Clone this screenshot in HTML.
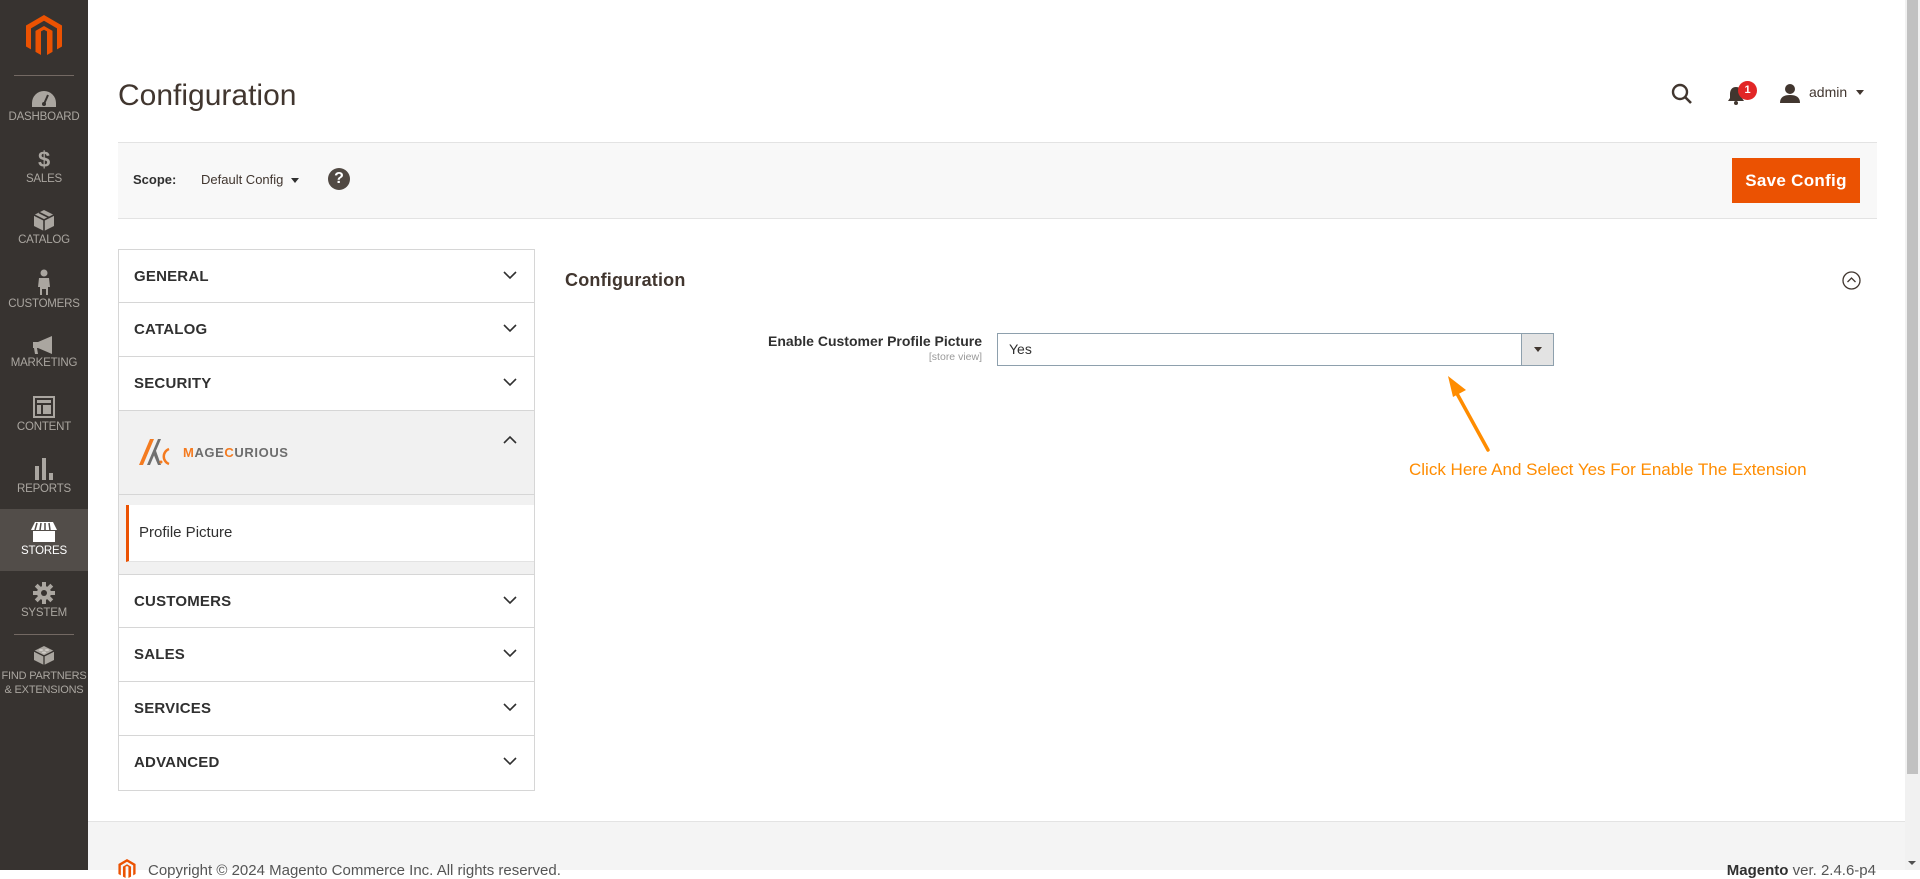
<!DOCTYPE html>
<html><head><meta charset="utf-8"><style>
*{box-sizing:border-box;margin:0;padding:0}
body{width:1920px;height:870px;overflow:hidden;background:#fff;font-family:"Liberation Sans",sans-serif;color:#303030;position:relative}
.sb{position:absolute;left:0;top:0;width:88px;height:870px;background:#373330}
.sb .it{position:absolute;left:0;width:88px;text-align:center;color:#aaa6a0;font-size:11.5px;letter-spacing:-.2px;white-space:nowrap}
.sb .it svg{display:block;margin:0 auto 3px}
.div{position:absolute;left:14px;width:60px;height:1px;background:#736963}
.abs{position:absolute}
.row{position:absolute;left:118px;width:417px;height:54px;border:1px solid #d6d6d6;border-top:none;background:#fff}
.row b{position:absolute;left:15px;top:18px;font-size:15px;color:#303030;letter-spacing:.2px}
.row svg{position:absolute;right:17px;top:21px}
</style></head><body>
<div class="sb">
 <svg class="abs" style="left:26px;top:15px" width="36" height="42" viewBox="0 0 36 42"><path d="M18 0L36 10.5V31.5L31 34.4V13.4L18 5.8L5 13.4V34.4L0 31.5V10.5Z M9.5 15.9L18 11L26.5 15.9V36.9L21 40V16.4L18 14.7L15 16.4V40L9.5 36.9Z" fill="#eb5202"/></svg>
 <div class="div" style="top:75px"></div>
 <div class="it" style="top:90px"><svg width="26" height="18" viewBox="0 0 26 18"><path d="M13 1A12 12 0 0 0 1 13v4h24v-4A12 12 0 0 0 13 1z" fill="#aaa6a0"/><path d="M13 14L17 5" stroke="#373330" stroke-width="2"/><circle cx="13" cy="14" r="2" fill="#373330"/></svg>DASHBOARD</div>
 <div class="it" style="top:149px"><div style="font-size:22px;font-weight:bold;line-height:22px;margin-bottom:2px">$</div>SALES</div>
 <div class="it" style="top:210px"><svg width="20" height="21" viewBox="0 0 20 21"><path d="M10 0L20 5V16L10 21L0 16V5Z" fill="#aaa6a0"/><path d="M0 5L10 10L20 5M10 10V21M5 2.5L15 7.5" stroke="#373330" stroke-width="1.6" fill="none"/></svg>CATALOG</div>
 <div class="it" style="top:269px"><svg width="14" height="26" viewBox="0 0 14 26"><circle cx="7" cy="4" r="3.5" fill="#aaa6a0"/><path d="M2 9h10l1 9h-2v8H9v-6H5v6H3v-8H1z" fill="#aaa6a0"/></svg>CUSTOMERS</div>
 <div class="it" style="top:336px"><svg width="24" height="18" viewBox="0 0 24 18"><path d="M1 6h5l14-6v18L6 12H5l1 6H3L2 12H1z" fill="#aaa6a0"/></svg>MARKETING</div>
 <div class="it" style="top:396px"><svg width="22" height="22" viewBox="0 0 22 22"><rect x="1" y="1" width="20" height="20" fill="none" stroke="#aaa6a0" stroke-width="2"/><rect x="4" y="4" width="14" height="3" fill="#aaa6a0"/><rect x="4" y="9" width="4" height="9" fill="#aaa6a0"/><rect x="10" y="9" width="8" height="9" fill="#aaa6a0"/></svg>CONTENT</div>
 <div class="it" style="top:458px"><svg width="20" height="22" viewBox="0 0 20 22"><rect x="1" y="8" width="4" height="14" fill="#aaa6a0"/><rect x="8" y="0" width="4" height="22" fill="#aaa6a0"/><rect x="15" y="15" width="4" height="7" fill="#aaa6a0"/></svg>REPORTS</div>
 <div class="abs" style="left:0;top:509px;width:88px;height:62px;background:#524d49"></div>
 <div class="it" style="top:522px;color:#fff"><svg width="26" height="20" viewBox="0 0 26 20"><path d="M4 0h18l4 8H0z" fill="#fff"/><path d="M6 1L4 8M10 1L9 8M14 1v7M18 1l1 7" stroke="#524d49" stroke-width="1.5"/><rect x="2" y="9" width="22" height="11" fill="#fff"/></svg>STORES</div>
 <div class="it" style="top:582px"><svg width="22" height="22" viewBox="0 0 22 22"><circle cx="11" cy="11" r="7" fill="#aaa6a0"/><g stroke="#aaa6a0" stroke-width="4"><path d="M11 0v22M0 11h22M3.2 3.2l15.6 15.6M18.8 3.2L3.2 18.8"/></g><circle cx="11" cy="11" r="3" fill="#373330"/></svg>SYSTEM</div>
 <div class="div" style="top:634px"></div>
 <div class="it" style="top:644px;line-height:14px;font-size:11px"><svg width="22" height="22" viewBox="0 0 22 22"><path d="M11 2L21 7V16L11 21L1 16V7Z" fill="#aaa6a0"/><path d="M1 7L11 12L21 7M11 12V21" stroke="#373330" stroke-width="1.3" fill="none"/><ellipse cx="8" cy="6" rx="2" ry="1" fill="#cfcbc6"/><ellipse cx="14" cy="6" rx="2" ry="1" fill="#cfcbc6"/><ellipse cx="11" cy="8.5" rx="2" ry="1" fill="#cfcbc6"/></svg>FIND PARTNERS<br>&amp; EXTENSIONS</div>
</div>

<div class="abs" style="left:118px;top:79px;font-size:30px;color:#41362f">Configuration</div>
<svg class="abs" style="left:1671px;top:83px" width="22" height="22" viewBox="0 0 22 22"><circle cx="9" cy="9" r="7" fill="none" stroke="#41362f" stroke-width="2.4"/><path d="M14 14l6 6" stroke="#41362f" stroke-width="2.6"/></svg>
<svg class="abs" style="left:1727px;top:86px" width="18" height="20" viewBox="0 0 18 20"><path d="M9 1C5 1 3 4 3 8v4L1 15h16l-2-3V8c0-4-2-7-6-7z" fill="#41362f"/><circle cx="9" cy="17" r="2" fill="#41362f"/></svg>
<div class="abs" style="left:1738px;top:81px;width:19px;height:19px;border-radius:50%;background:#e22626;color:#fff;font-size:11px;font-weight:bold;text-align:center;line-height:19px">1</div>
<svg class="abs" style="left:1780px;top:83px" width="20" height="20" viewBox="0 0 20 20"><circle cx="10" cy="6" r="5" fill="#41362f"/><path d="M0 20c0-6 4-8 10-8s10 2 10 8z" fill="#41362f"/></svg>
<div class="abs" style="left:1809px;top:84px;font-size:14px;color:#41362f">admin</div>
<div class="abs" style="left:1856px;top:90px;border:4px solid transparent;border-top:5px solid #41362f"></div>

<div class="abs" style="left:118px;top:142px;width:1759px;height:77px;background:#f8f8f8;border-top:1px solid #e3e3e3;border-bottom:1px solid #e3e3e3"></div>
<div class="abs" style="left:133px;top:172px;font-size:13px;font-weight:bold">Scope:</div>
<div class="abs" style="left:201px;top:172px;font-size:13px;color:#41362f">Default Config</div>
<div class="abs" style="left:291px;top:178px;border:4px solid transparent;border-top:5px solid #303030"></div>
<div class="abs" style="left:328px;top:168px;width:22px;height:22px;border-radius:50%;background:#514943;color:#fff;font-weight:bold;font-size:16px;text-align:center;line-height:22px">?</div>
<div class="abs" style="left:1732px;top:158px;width:128px;height:45px;background:#eb5202;color:#fff;font-size:17px;font-weight:bold;text-align:center;line-height:45px;letter-spacing:.3px">Save Config</div>

<div class="row" style="top:249px;border-top:1px solid #d6d6d6"><b>GENERAL</b><svg width="14" height="9" viewBox="0 0 14 9"><path d="M1 1l6 6 6-6" fill="none" stroke="#303030" stroke-width="1.6"/></svg></div>
<div class="row" style="top:303px"><b>CATALOG</b><svg width="14" height="9" viewBox="0 0 14 9"><path d="M1 1l6 6 6-6" fill="none" stroke="#303030" stroke-width="1.6"/></svg></div>
<div class="row" style="top:357px"><b>SECURITY</b><svg width="14" height="9" viewBox="0 0 14 9"><path d="M1 1l6 6 6-6" fill="none" stroke="#303030" stroke-width="1.6"/></svg></div>
<div class="row" style="top:411px;height:84px;background:#f1f1f1"><svg style="right:17px;top:24px" width="14" height="9" viewBox="0 0 14 9"><path d="M1 8l6-6 6 6" fill="none" stroke="#303030" stroke-width="1.6"/></svg></div>
<svg class="abs" style="left:139px;top:438px" width="34" height="28" viewBox="0 0 34 28"><path d="M0 27L11 1h4L4 27z" fill="#f47b20"/><path d="M8 27L19 1h3L11 27z" fill="#707070"/><path d="M16 10l6 17h-3l-5-12z" fill="#707070"/><circle cx="22" cy="24" r="1.5" fill="#f47b20"/><path d="M30 11a8 8 0 0 0 0 15" fill="none" stroke="#f47b20" stroke-width="2.5"/></svg>
<div class="abs" style="left:183px;top:445px;font-size:13px;font-weight:bold;letter-spacing:.6px;color:#6d6d6d"><span style="color:#f47b20">M</span>AGE<span style="color:#f47b20">C</span>URIOUS</div>
<div class="abs" style="left:118px;top:495px;width:417px;height:79px;background:#f1f1f1;border-left:1px solid #d6d6d6;border-right:1px solid #d6d6d6"></div>
<div class="abs" style="left:126px;top:505px;width:408px;height:57px;background:#fff;border-left:3px solid #eb5202;border-bottom:1px solid #e3e3e3"></div>
<div class="abs" style="left:139px;top:524px;font-size:15px;color:#303030">Profile Picture</div>
<div class="row" style="top:574px;border-top:1px solid #d6d6d6"><b>CUSTOMERS</b><svg width="14" height="9" viewBox="0 0 14 9"><path d="M1 1l6 6 6-6" fill="none" stroke="#303030" stroke-width="1.6"/></svg></div>
<div class="row" style="top:628px"><b>SALES</b><svg width="14" height="9" viewBox="0 0 14 9"><path d="M1 1l6 6 6-6" fill="none" stroke="#303030" stroke-width="1.6"/></svg></div>
<div class="row" style="top:682px"><b>SERVICES</b><svg width="14" height="9" viewBox="0 0 14 9"><path d="M1 1l6 6 6-6" fill="none" stroke="#303030" stroke-width="1.6"/></svg></div>
<div class="row" style="top:736px;height:55px"><b>ADVANCED</b><svg width="14" height="9" viewBox="0 0 14 9"><path d="M1 1l6 6 6-6" fill="none" stroke="#303030" stroke-width="1.6"/></svg></div>

<div class="abs" style="left:565px;top:270px;font-size:18px;font-weight:bold;color:#41362f;letter-spacing:.2px">Configuration</div>
<svg class="abs" style="left:1842px;top:271px" width="19" height="19" viewBox="0 0 19 19"><circle cx="9.5" cy="9.5" r="8.5" fill="none" stroke="#41362f" stroke-width="1.3"/><path d="M5.5 11l4-4 4 4" fill="none" stroke="#41362f" stroke-width="1.3"/></svg>
<div class="abs" style="left:600px;top:333px;width:382px;text-align:right;font-size:14px;font-weight:bold;color:#303030">Enable Customer Profile Picture</div>
<div class="abs" style="left:800px;top:351px;width:182px;text-align:right;font-size:10.5px;color:#999">[store view]</div>
<div class="abs" style="left:997px;top:333px;width:557px;height:33px;border:1px solid #8ea0ad;background:#fff"></div>
<div class="abs" style="left:1009px;top:341px;font-size:14px;color:#303030">Yes</div>
<div class="abs" style="left:1521px;top:333px;width:33px;height:33px;border:1px solid #8ea0ad;background:#e3e3e3"></div>
<div class="abs" style="left:1534px;top:347px;border:4px solid transparent;border-top:5px solid #41362f"></div>
<svg class="abs" style="left:1440px;top:370px" width="60" height="85" viewBox="0 0 60 85"><path d="M48 80L15 20" stroke="#ff8c00" stroke-width="3.5" stroke-linecap="round"/><path d="M8 6L26 20L13 27Z" fill="#ff8c00"/></svg>
<div class="abs" style="left:1409px;top:460px;font-size:17px;color:#ff8c00">Click Here And Select Yes For Enable The Extension</div>

<div class="abs" style="left:88px;top:821px;width:1817px;height:49px;background:#f4f4f4;border-top:1px solid #e3e3e3"></div>
<svg class="abs" style="left:118px;top:859px" width="18" height="20" viewBox="0 0 36 42"><path d="M18 0L36 10.5V31.5L31 34.4V13.4L18 5.8L5 13.4V34.4L0 31.5V10.5Z M9.5 15.9L18 11L26.5 15.9V36.9L21 40V16.4L18 14.7L15 16.4V40L9.5 36.9Z" fill="#eb5202"/></svg>
<div class="abs" style="left:148px;top:862px;font-size:15px;color:#555">Copyright © 2024 Magento Commerce Inc. All rights reserved.</div>
<div class="abs" style="left:1600px;top:862px;width:276px;text-align:right;font-size:15px;color:#555"><b style="color:#303030">Magento</b> ver. 2.4.6-p4</div>

<div class="abs" style="left:1905px;top:0;width:15px;height:870px;background:#f1f1f1"></div>
<div class="abs" style="left:1907px;top:0;width:11px;height:774px;background:#c1c1c1"></div>
<div class="abs" style="left:1908px;top:861px;border:4px solid transparent;border-top:4px solid #505050"></div>
</body></html>
